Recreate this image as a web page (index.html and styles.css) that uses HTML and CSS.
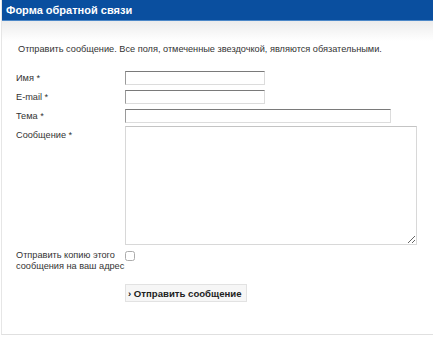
FILE: index.html
```html
<!DOCTYPE html>
<html lang="ru">
<head>
    <meta charset="UTF-8">
    <title>Форма обратной связи</title>
    <link rel="stylesheet" href="styles.css">
</head>
<body>

<div class="box">
    <div class="box-title">Форма обратной связи</div>
    <div class="box-body">
        <p class="intro">Отправить сообщение. Все поля, отмеченные звездочкой, являются обязательными.</p>

        <form class="contact-form">
            <div class="row">
                <label for="name">Имя *</label>
                <input type="text" id="name" class="field short">
            </div>
            <div class="row">
                <label for="email">E-mail *</label>
                <input type="text" id="email" class="field short">
            </div>
            <div class="row">
                <label for="subject">Тема *</label>
                <input type="text" id="subject" class="field long">
            </div>
            <div class="row">
                <label for="message">Сообщение *</label>
                <textarea id="message" class="message"></textarea>
            </div>
            <div class="row copy-row">
                <label for="copy">Отправить копию этого<br>сообщения на ваш адрес</label>
                <input type="checkbox" id="copy" class="check">
            </div>
            <div class="row submit-row">
                <span class="spacer"></span>
                <button type="button" class="btn">&rsaquo; Отправить сообщение</button>
            </div>
        </form>
    </div>
</div>

</body>
</html>
```

FILE: styles.css
```css
body {
    margin: 0;
    padding: 0;
    background-color: #ffffff;
    font-family: "Liberation Sans", Arial, sans-serif;
    font-size: 9.2px;
    color: #333;
}
.box {
    width: 432px;
    height: 335px;
    border-left: 1px solid #e6e6e6;
    border-bottom: 1px solid #e0e0e0;
    margin-left: 1px;
    box-sizing: border-box;
}
.box-title {
    background-color: #0a4f9f;
    border-bottom: 1px solid #4d88c8;
    color: #ffffff;
    font-weight: bold;
    font-size: 11px;
    height: 21px;
    line-height: 20px;
    padding-left: 4px;
    box-sizing: border-box;
}
.box-body {
    background: linear-gradient(#ececec, #ffffff 20px);
    padding: 22px 0 0 14px;
}
.intro {
    margin: 0 0 16px 2px;
    line-height: 12px;
}
.row {
    display: flex;
    align-items: flex-start;
    margin-bottom: 5px;
}
.row label {
    width: 109px;
    line-height: 14px;
    flex-shrink: 0;
}
.field {
    height: 14px;
    padding: 0;
    border: 1px solid #dcdcdc;
    border-top-color: #7a7a7a;
    border-left-color: #9a9a9a;
    box-sizing: border-box;
}
.short {
    width: 140px;
}
.long {
    width: 266px;
}
.message {
    width: 292px;
    height: 119px;
    margin: 0;
    border: 1px solid #d8d8d8;
    border-top-color: #c4c4c4;
    box-sizing: border-box;
    margin-top: -2px;
}
.copy-row {
    margin-top: 2px;
}
.copy-row label {
    line-height: 11px;
}
.check {
    width: 10px;
    height: 10px;
    margin: 0;
    margin-top: 1px;
    accent-color: #cccccc;
    opacity: 0.6;
}
.submit-row {
    margin-top: 12px;
}
.spacer {
    width: 109px;
    flex-shrink: 0;
}
.btn {
    font-family: "Liberation Sans", Arial, sans-serif;
    font-size: 9.6px;
    font-weight: bold;
    color: #222;
    background-color: #f6f6f6;
    border: 1px solid #e2e2e2;
    height: 18px;
    padding: 0 4px 0 2px;
    cursor: pointer;
}
```
